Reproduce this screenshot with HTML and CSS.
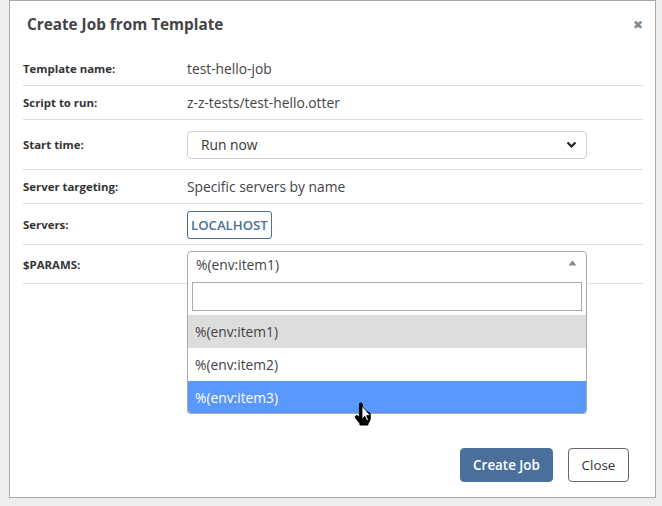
FILE: index.html
```html
<!DOCTYPE html>
<html>
<head>
<meta charset="utf-8">
<link rel="stylesheet" href="styles.css">
</head>
<body>
<div class="dialog">
  <div class="header">
    <h1 class="title">Create Job from Template</h1>
    <span class="close-x">&#x2716;</span>
  </div>
  <div class="body">
    <div class="row">
      <div class="label">Template name:</div>
      <div class="value">test-hello-job</div>
    </div>
    <div class="row">
      <div class="label">Script to run:</div>
      <div class="value">z-z-tests/test-hello.otter</div>
    </div>
    <div class="row row-select">
      <div class="label">Start time:</div>
      <div class="select">
        <span>Run now</span>
        <svg class="chev" width="11" height="8" viewBox="0 0 11 8"><path d="M1.5 1.5 L5.5 5.5 L9.5 1.5" fill="none" stroke="#222" stroke-width="2.2"/></svg>
      </div>
    </div>
    <div class="row">
      <div class="label">Server targeting:</div>
      <div class="value">Specific servers by name</div>
    </div>
    <div class="row row-servers">
      <div class="label">Servers:</div>
      <div class="tag">LOCALHOST</div>
    </div>
    <div class="row row-params">
      <div class="label">$PARAMS:</div>
      <div class="combo">
        <span>%(env:item1)</span>
        <svg class="tri" width="9" height="6" viewBox="0 0 9 6"><path d="M0.5 5.5 L4.5 0.5 L8.5 5.5 Z" fill="#888"/></svg>
        <div class="dropdown">
          <div class="search"><div class="search-box"></div></div>
          <div class="opt opt-hover">%(env:item1)</div>
          <div class="opt">%(env:item2)</div>
          <div class="opt opt-active">%(env:item3)</div>
        </div>
      </div>
    </div>
  </div>
  <div class="footer">
    <button class="btn btn-primary">Create Job</button>
    <button class="btn btn-default">Close</button>
  </div>
  <svg class="cursor" width="20" height="24" viewBox="0 0 20 24">
    <path d="M5.5 1.5 C6.5 0.5 8 1 8.3 2.3 L8.5 9 L10 8.6 C11 8.4 11.6 9 11.8 9.6 C12.6 9.2 13.6 9.5 14 10.3 C14.8 10 15.8 10.4 16 11.4 L16.3 15.5 C16.4 18 15.2 20 14.2 21 L13.8 23 L6 23 L5.8 21.3 L1.8 16.2 C0.8 14.9 1.6 13.4 3 13.6 L5.3 15.2 Z" fill="#000" stroke="#000" stroke-width="1"/>
    <path d="M8 4 L8 17 L10.8 14.3 L12.8 18.8 L14.5 18 L12.6 13.6 L16.3 13.6 Z" fill="#fff" stroke="#000" stroke-width="0.8"/>
  </svg>
</div>
</body>
</html>
```

FILE: styles.css
```css
html, body {
  margin: 0;
  padding: 0;
}
body {
  background: #eeeeee;
  width: 662px;
  height: 506px;
  overflow: hidden;
  font-family: "Open Sans", "Noto Sans", sans-serif;
  color: #333;
}
.dialog {
  position: relative;
  margin-left: 9px;
  width: 645px;
  height: 496px;
  background: #fff;
  border: 1px solid #a9a9a9;
  box-sizing: content-box;
}
.header {
  display: flex;
  justify-content: space-between;
  align-items: center;
  padding: 4px 12px 0 17px;
  height: 38px;
}
.title {
  margin: 0;
  font-size: 15.3px;
  font-weight: 700;
  color: #444;
}
.close-x {
  font-size: 12px;
  color: #888;
  margin-top: 1px;
}
.body {
  margin: 8px 12px 0 13px;
}
.row {
  display: flex;
  align-items: center;
  height: 33px;
  border-bottom: 1px solid #dddddd;
}
.row:first-child {
  height: 34px;
}
.label {
  flex: none;
  width: 164px;
  font-size: 11.4px;
  font-weight: 700;
  color: #333;
}
.value {
  font-size: 13.8px;
  color: #444;
}
.row-select {
  height: 49px;
}
.row-servers {
  height: 40px;
}
.row-params {
  height: 38px;
  align-items: flex-start;
}
.row-params .label {
  padding-top: 12px;
}
.select {
  width: 400px;
  height: 28px;
  box-sizing: border-box;
  border: 1px solid #cfcfcf;
  border-radius: 4px;
  display: flex;
  align-items: center;
  justify-content: space-between;
  padding: 0 9px 0 13px;
  font-size: 13.8px;
  color: #333;
}
.tag {
  height: 28px;
  box-sizing: border-box;
  border: 1px solid #4a6f9a;
  border-radius: 3px;
  padding: 0 3px;
  display: flex;
  align-items: center;
  font-size: 13.2px;
  font-weight: 600;
  color: #4a6f9a;
  margin-top: 1px;
}
.combo {
  position: relative;
  margin-top: 6px;
  width: 400px;
  height: 26px;
  box-sizing: border-box;
  border: 1px solid #aaaaaa;
  border-radius: 4px 4px 0 0;
  display: flex;
  align-items: center;
  justify-content: space-between;
  padding: 0 9px 0 8px;
  font-size: 13.8px;
  color: #444;
}
.tri {
  margin-top: -2px;
}
.dropdown {
  position: absolute;
  left: -1px;
  top: 24px;
  width: 400px;
  box-sizing: border-box;
  background: #fff;
  border: 1px solid #aaaaaa;
  border-top: none;
  border-radius: 0 0 4px 4px;
  overflow: hidden;
  z-index: 2;
}
.search {
  padding: 6px 4px 4px 4px;
}
.search-box {
  height: 29px;
  box-sizing: border-box;
  border: 1px solid #aaaaaa;
}
.opt {
  height: 33px;
  display: flex;
  align-items: center;
  padding-left: 7px;
  font-size: 13.8px;
  color: #444;
}
.opt-hover {
  background: #dddddd;
}
.opt-active {
  background: #5897fb;
  color: #fff;
  height: 32px;
}
.footer {
  position: absolute;
  right: 26px;
  bottom: 15px;
  display: flex;
  gap: 15px;
}
.btn {
  height: 34px;
  box-sizing: border-box;
  border-radius: 4px;
  font-family: "Open Sans", "Noto Sans", sans-serif;
  font-size: 13.4px;
  padding: 0 10px;
}
.btn-primary {
  width: 93px;
  background: #4a6f9a;
  border: 1px solid #4a6f9a;
  color: #fff;
  font-weight: 600;
}
.btn-default {
  width: 61px;
  background: #fff;
  border: 1px solid #666;
  color: #333;
}
.cursor {
  position: absolute;
  left: 344px;
  top: 401px;
  z-index: 5;
}
```
